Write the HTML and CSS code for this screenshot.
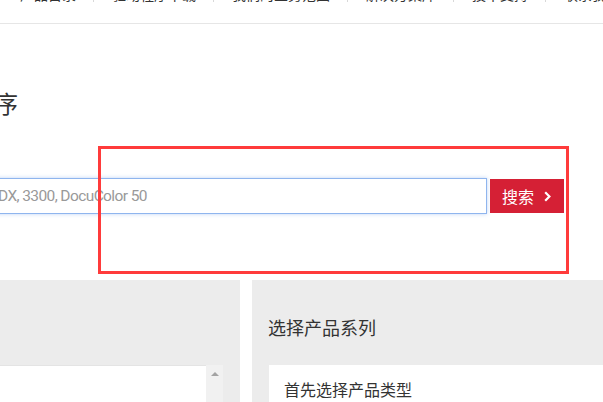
FILE: index.html
```html
<!DOCTYPE html>
<html lang="zh-CN">
<head>
<meta charset="utf-8">
<title>搜索驱动程序</title>
<link rel="stylesheet" href="styles.css">
</head>
<body>
<header class="header">
  <ul class="nav">
    <li>产品目录</li>
    <li>驱动程序下载</li>
    <li>我们的业务范围</li>
    <li>解决方案库</li>
    <li>技术支持</li>
    <li>联系我们</li>
  </ul>
</header>

<h1 class="title">搜索驱动程序</h1>

<form class="search" onsubmit="return false">
  <input class="search-input" type="text" placeholder="DX, 3300, DocuColor 50">
  <button class="search-btn" type="submit">
    <span>搜索</span>
    <svg class="chev" width="7" height="11" viewBox="0 0 7 11"><path d="M1.2 1.2 L5.4 5.5 L1.2 9.8" fill="none" stroke="#fff" stroke-width="2.2"/></svg>
  </button>
</form>

<div class="panels">
  <section class="panel panel-left">
    <h2 class="panel-title">选择产品类型</h2>
    <div class="panel-body list-body">
      <div class="list"></div>
      <div class="scrollbar"><span class="arrow-up"></span></div>
    </div>
  </section>
  <section class="panel panel-right">
    <h2 class="panel-title">选择产品系列</h2>
    <div class="panel-body">
      <p class="hint">首先选择产品类型</p>
    </div>
  </section>
</div>

<div class="annot"></div>
</body>
</html>
```

FILE: styles.css
```css
* { box-sizing: border-box; }

html, body {
  margin: 0;
  padding: 0;
  width: 603px;
  height: 402px;
  overflow: hidden;
  background: #fff;
}

body {
  font-family: "Noto Sans CJK SC", "Noto Sans", sans-serif;
  color: #333;
}

.header {
  height: 24px;
  border-bottom: 1px solid #e6e6e6;
  overflow: hidden;
}

.nav {
  display: flex;
  list-style: none;
  margin: -14px 0 0 0;
  padding: 0 0 0 20px;
  font-size: 14px;
  line-height: 16px;
  white-space: nowrap;
}

.nav li {
  padding: 0 17px 0 18px;
}

.nav li:first-child { padding-left: 0; }

.nav li + li {
  border-left: 1px solid #d8d8d8;
}

.title {
  margin: 67px 0 0 -126px;
  font-size: 24px;
  line-height: 24px;
  font-weight: normal;
  white-space: nowrap;
  color: #333;
}

.search {
  display: flex;
  align-items: center;
  margin: 63px 0 0 -14px;
  height: 36px;
}

.search-input {
  width: 501px;
  height: 36px;
  border: 1px solid #8fb5ee;
  box-shadow: 0 0 4px rgba(110, 160, 235, 0.45);
  padding: 0 0 0 11px;
  font-family: Roboto, "Noto Sans", sans-serif;
  font-size: 15.5px;
  letter-spacing: -0.6px;
  color: #333;
  outline: none;
  background: #fff;
}

.search-input::placeholder {
  color: #999;
}

.search-btn {
  display: flex;
  align-items: center;
  gap: 10px;
  margin-left: 3px;
  width: 74px;
  height: 34px;
  padding: 0 0 0 12px;
  border: none;
  background: #d52035;
  color: #fff;
  font-family: "Noto Sans CJK SC", sans-serif;
  font-size: 16px;
  line-height: 34px;
}

.chev { display: block; }

.panels {
  display: flex;
  gap: 12px;
  margin: 66px 0 0 -300px;
}

.panel {
  background: #ececec;
  flex: none;
}

.panel-left { width: 540px; }
.panel-right { width: 600px; }

.panel-title {
  margin: 0;
  padding: 35px 16px 26px;
  height: 85px;
  font-size: 18px;
  line-height: 24px;
  font-weight: normal;
  color: #333;
}

.panel-body {
  margin: 0 17px;
  height: 200px;
  background: #fff;
}

.list-body {
  display: flex;
  background: none;
}

.list {
  flex: 1;
  background: #fff;
  border-top: 1px solid #e4e4e4;
}

.scrollbar {
  width: 17px;
  background: #f1f1f1;
  position: relative;
}

.arrow-up {
  position: absolute;
  left: 5px;
  top: 7px;
  width: 0;
  height: 0;
  border-left: 4px solid transparent;
  border-right: 4px solid transparent;
  border-bottom: 4px solid #a3a3a3;
}

.hint {
  margin: 0;
  padding: 14px 15px;
  font-size: 16px;
  line-height: 20px;
  color: #333;
}

.annot {
  position: absolute;
  left: 98px;
  top: 146px;
  width: 471px;
  height: 128px;
  border: 3px solid #ff3b3b;
}
```
